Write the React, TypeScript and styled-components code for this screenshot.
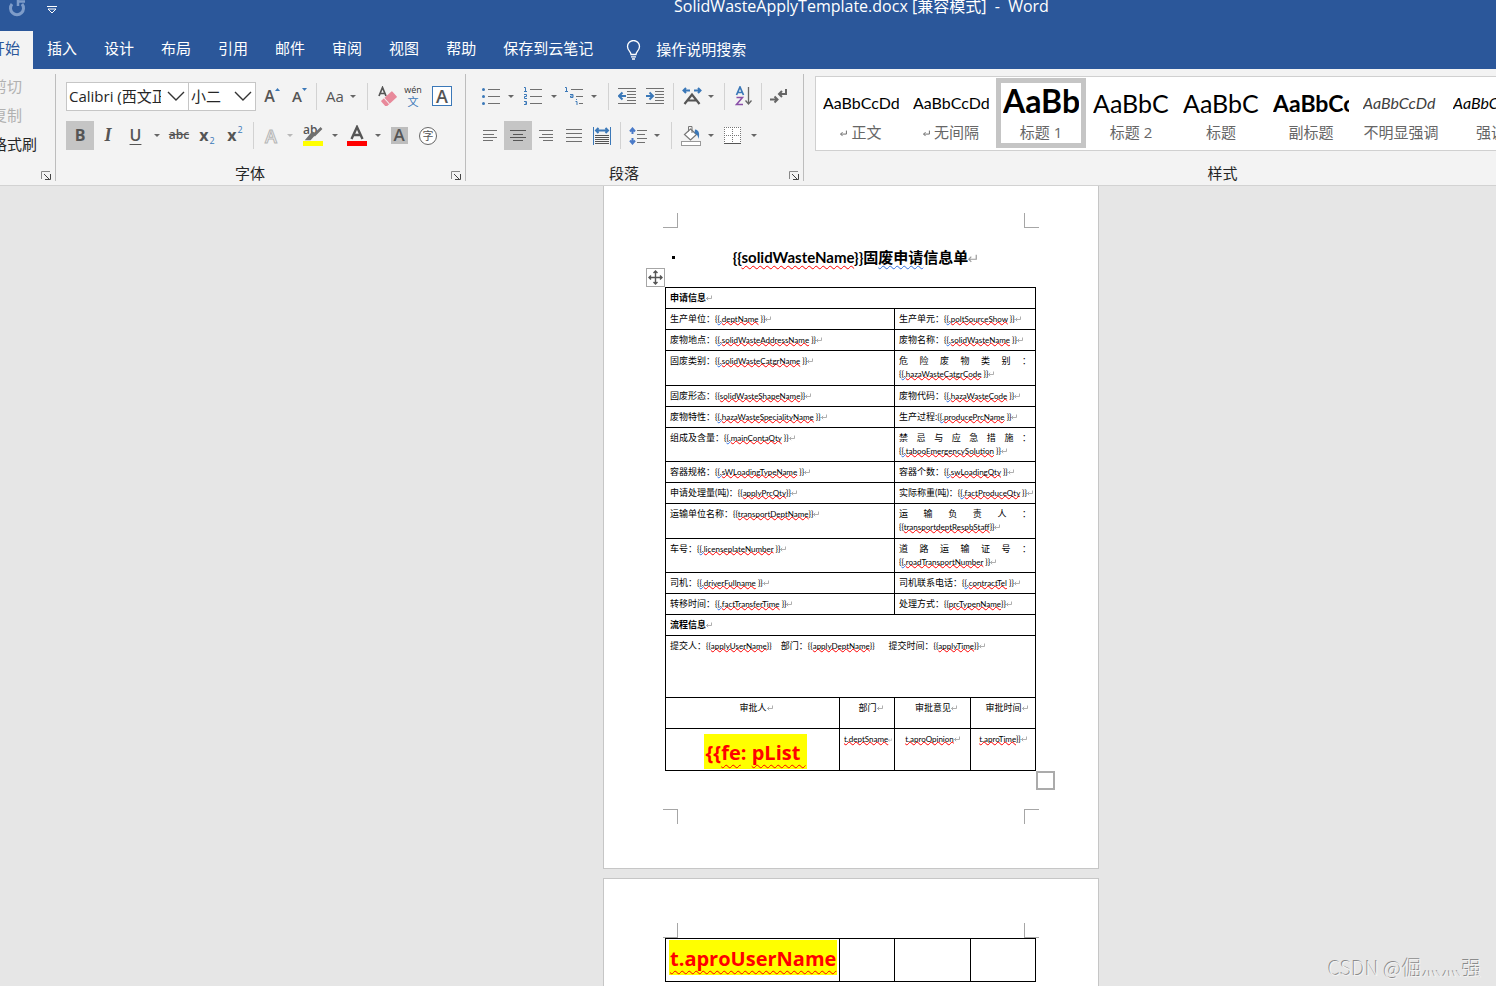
import React from "react";
import styled, { createGlobalStyle, css } from "styled-components";

const UI = `"Open Sans", "Noto Sans CJK SC", sans-serif`;
const DOC = `Lato, "Noto Sans CJK SC", sans-serif`;
const BLUE = "#3b78b8";
const GRAY = "#666666";

const Global = createGlobalStyle`
  *, *::before, *::after { box-sizing: border-box; }
  html, body { margin: 0; padding: 0; }
  body { font-family: ${UI}; font-size: 15px; color: #262626; background: #e6e6e6; }
  button, select { font: inherit; color: inherit; margin: 0; border: 0; padding: 0; background: none; }
  svg { display: block; flex: none; }
`;

/* ---------- window frame ---------- */
const Shell = styled.div`
  display: flex;
  flex-direction: column;
  height: 100vh;
  overflow: hidden;
`;
const TitleBar = styled.header`
  position: relative;
  flex: none;
  display: flex;
  align-items: flex-start;
  gap: 21px;
  height: 31px;
  padding: 0 8px;
  background: #2b579a;
  color: #fff;
`;
const QuickButton = styled.button`
  display: flex;
  height: 18px;
  align-items: center;
`;
const DocName = styled.h1`
  margin: 0;
  position: absolute;
  left: 0;
  right: 0;
  top: -4px;
  padding-left: 227px;
  text-align: center;
  font-size: 16px;
  line-height: 20px;
  font-weight: 400;
  white-space: pre;
  pointer-events: none;
`;
const TabBar = styled.nav`
  flex: none;
  display: flex;
  gap: 1px;
  height: 38px;
  background: #2b579a;
  overflow: hidden;
`;
const Tab = styled.button<{ $active?: boolean }>`
  flex: none;
  padding: 0 13px;
  line-height: 34px;
  padding-bottom: 4px;
  color: ${(p) => (p.$active ? "#2b579a" : "#fff")};
  background: ${(p) => (p.$active ? "#f3f3f3" : "transparent")};
  &:first-child { margin-left: -23px; }
`;
const TellMe = styled.button`
  display: flex;
  align-items: center;
  gap: 15px;
  padding: 0 19px 4px;
  color: #fff;
  svg { margin-top: 4px; }
`;

/* ---------- ribbon ---------- */
const Ribbon = styled.section`
  flex: none;
  display: flex;
  height: 117px;
  padding: 5px 0 4px;
  background: #f3f3f3;
  border-bottom: 1px solid #d2d2d2;
  overflow: hidden;
`;
const Group = styled.div<{ $w?: number }>`
  position: relative;
  flex: ${(p) => (p.$w ? "none" : "1")};
  min-width: 0;
  width: ${(p) => (p.$w ? p.$w + "px" : "auto")};
  display: flex;
  flex-direction: column;
  padding: 8px 0 0 10px;
  border-right: ${(p) => (p.$w ? "1px solid #bdbdbd" : "0")};
`;
const StylesGroup = styled(Group)`
  padding: 2px 0 0 11px;
`;
const GroupLabel = styled.div<{ $before?: number; $after?: number }>`
  margin: auto 0 -2px -10px;
  padding: 0 ${(p) => p.$after || 0}px 0 ${(p) => p.$before || 0}px;
  text-align: center;
  line-height: 20px;
`;
const Launcher = styled.button`
  position: absolute;
  right: 4px;
  bottom: 1px;
`;
const ClipList = styled.div`
  display: flex;
  flex-direction: column;
  align-items: flex-start;
  margin-left: -18px;
  margin-top: -6px;
  line-height: 20px;
  gap: 9px;
`;
const ClipButton = styled.button<{ $off?: boolean }>`
  line-height: 20px;
  white-space: nowrap;
  color: ${(p) => (p.$off ? "#b1b1b1" : "#262626")};
`;
const Row = styled.div`
  display: flex;
  align-items: center;
  height: 28px;
  & + & { margin-top: 11px; height: 29px; }
`;
const Tool = styled.button<{ $w: number; $on?: boolean }>`
  flex: none;
  display: flex;
  align-items: center;
  justify-content: center;
  width: ${(p) => p.$w}px;
  height: 29px;
  background: ${(p) => (p.$on ? "#c5c5c5" : "transparent")};
`;
const Sep = styled.span<{ $lead?: number; $tail?: number }>`
  flex: none;
  width: 1px;
  height: 27px;
  margin: 0 ${(p) => p.$tail ?? 4}px 0 ${(p) => p.$lead ?? 4}px;
  background: #d2d2d2;
`;
const Combo = styled.label<{ $w: number }>`
  flex: none;
  display: flex;
  align-items: center;
  gap: 6px;
  width: ${(p) => p.$w}px;
  height: 29px;
  padding: 0 3px 0 2px;
  background: #fff;
  border: 1px solid #c6c6c6;
  & + & { gap: 0; margin-left: -1px; margin-right: 2px; }
`;
const ComboSelect = styled.select`
  appearance: none;
  flex: 1;
  min-width: 0;
  height: 24px;
  outline: 0;
`;

const Arrow = ({ w = 12, off, label }: { w?: number; off?: boolean; label: string }) => (
  <Tool $w={w} aria-label={label}>
    <svg width="6" height="3" viewBox="0 0 6 3"><path d="M0 0h6L3 3z" fill={off ? "#b8b8b8" : GRAY} /></svg>
  </Tool>
);
const Chevron = () => (
  <svg width="18" height="10" viewBox="0 0 18 10"><path d="M1 1l8 8 8-8" fill="none" stroke="#333" strokeWidth="1.4" /></svg>
);
const Launch = ({ label }: { label: string }) => (
  <Launcher aria-label={label}>
    <svg width="10" height="9" viewBox="0 0 10 9" fill="none" stroke="#444">
      <path d="M.5 8V.5H9" stroke="#888" /><path d="M3 3l5 5M4 8.500h5.500V3" />
    </svg>
  </Launcher>
);

/* text-like icons drawn with type */
const Glyph = styled.span<{ $size?: number; $weight?: number; $italic?: boolean; $serif?: boolean; $line?: string }>`
  font-family: ${(p) => (p.$serif ? `"Liberation Serif", serif` : UI)};
  font-size: ${(p) => p.$size || 16}px;
  font-weight: ${(p) => p.$weight || 600};
  font-style: ${(p) => (p.$italic ? "italic" : "normal")};
  line-height: 20px;
  padding-bottom: 1px;
  color: #555;
  text-decoration: ${(p) => p.$line || "none"};
  text-decoration-thickness: 1px;
  text-underline-offset: 3px;
`;
const Script = styled.span<{ $up?: boolean }>`
  align-self: ${(p) => (p.$up ? "flex-start" : "flex-end")};
  margin: ${(p) => (p.$up ? "4px 0 0 1px" : "0 0 4px 1px")};
  font-size: 9px;
  line-height: 10px;
  color: ${BLUE};
`;
const Stack = styled.span`
  display: flex;
  flex-direction: column;
  align-items: center;
`;
const Pinyin = styled.span`
  font-size: 9px;
  line-height: 11px;
  color: #333;
`;
const Han = styled.span`
  font-size: 11px;
  line-height: 14px;
  color: ${BLUE};
`;
const BoxedA = styled.span`
  display: flex;
  align-items: center;
  justify-content: center;
  width: 20px;
  height: 20px;
  border: 1px solid ${BLUE};
  background: #fff;
`;
const ShadedA = styled(BoxedA)`
  width: 17px;
  height: 17px;
  border: 0;
  background: #bdbdbd;
`;
const Circled = styled(BoxedA)`
  width: 18px;
  height: 18px;
  border: 1px solid #666;
  border-radius: 50%;
  font-size: 11px;
  line-height: 16px;
  color: #555;
`;
const OutlineA = styled.span`
  font-size: 18px;
  font-weight: 600;
  line-height: 20px;
  color: #f6f6f6;
  -webkit-text-stroke: 1px #b5b5b5;
`;

const Lines = ({ rows, w = 18, h = 18, color = "#707070", children }: { rows: [number, number, number][]; w?: number; h?: number; color?: string; children?: React.ReactNode }) => (
  <svg width={w} height={h} viewBox={`0 0 ${w} ${h}`}>
    <g fill={color}>{rows.map(([x, y, l]) => <rect key={`${x}-${y}`} x={x} y={y} width={l} height="1" />)}</g>
    {children}
  </svg>
);

/* ---------- style gallery ---------- */
const Gallery = styled.div`
  display: flex;
  height: 75px;
  padding: 1px 0;
  background: #fff;
  border: 1px solid #d0d0d0;
  border-right: 0;
  overflow: hidden;
`;
const StyleCell = styled.button<{ $on?: boolean }>`
  flex: none;
  display: flex;
  flex-direction: column;
  width: 90px;
  height: 70px;
  padding: ${(p) => (p.$on ? "0 2px" : "5px 7px")};
  border: ${(p) => (p.$on ? "5px solid #c5c5c5" : "0")};
`;
const Preview = styled.span<{ $size: number; $weight?: number; $italic?: boolean; $color?: string }>`
  width: 76px;
  height: 37px;
  line-height: ${(p) => (p.$size > 30 ? 36 : 40)}px;
  overflow: hidden;
  white-space: nowrap;
  text-align: left;
  font-family: ${DOC};
  font-size: ${(p) => p.$size}px;
  font-weight: ${(p) => p.$weight || 400};
  font-style: ${(p) => (p.$italic ? "italic" : "normal")};
  color: ${(p) => p.$color || "#000"};
`;
const StyleName = styled.span`
  display: flex;
  align-self: stretch;
  align-items: center;
  justify-content: center;
  gap: 4px;
  height: 23px;
  line-height: 26px;
  white-space: nowrap;
  color: #666;
  svg { margin-top: 4px; }
`;

const styleList = [
  { text: "AaBbCcDd", name: "正文", size: 16, mark: true },
  { text: "AaBbCcDd", name: "无间隔", size: 16, mark: true },
  { text: "AaBb", name: "标题 1", size: 32, weight: 700, on: true },
  { text: "AaBbC", name: "标题 2", size: 25 },
  { text: "AaBbC", name: "标题", size: 25 },
  { text: "AaBbCc", name: "副标题", size: 23, weight: 700 },
  { text: "AaBbCcDd", name: "不明显强调", size: 16, italic: true, color: "#404040" },
  { text: "AaBbCcDd", name: "强调", size: 16, italic: true },
];

/* ---------- document ---------- */
const Canvas = styled.main`
  position: relative;
  flex: 1;
  min-height: 0;
  display: flex;
  flex-direction: column;
  align-items: center;
  gap: 9px;
  padding-left: 206px;
  background: #e6e6e6;
  overflow: hidden;
`;
const Page = styled.article<{ $first?: boolean }>`
  flex: none;
  width: 496px;
  padding: ${(p) => (p.$first ? "27px 59px 44px" : "44px 59px 60px")};
  background: #fff;
  border: 1px solid #c6c6c6;
  ${(p) => p.$first && css`border-top: 0;`}
`;
const MarkRow = styled.div`
  display: flex;
  justify-content: space-between;
`;
const Mark = styled.span<{ $v: "left" | "right"; $h: "top" | "bottom" }>`
  width: 15px;
  height: 15px;
  border: 0 solid #a6a6a6;
  border-${(p) => p.$v}-width: 1px;
  border-${(p) => p.$h}-width: 1px;
`;
const Heading = styled.h2`
  position: relative;
  margin: 19px 0 20px;
  padding-left: 8px;
  text-align: center;
  font-family: ${DOC};
  font-size: 15px;
  line-height: 20px;
  font-weight: 700;
  color: #000;
  white-space: nowrap;
  &::before {
    content: "";
    position: absolute;
    left: 9px;
    top: 9px;
    width: 3px;
    height: 3px;
    background: #000;
  }
`;
const TableWrap = styled.div<{ $below?: number }>`
  position: relative;
  margin: 0 2px ${(p) => p.$below || 0}px;
`;
const MoveHandle = styled.button`
  position: absolute;
  left: -19px;
  top: -19px;
  width: 19px;
  height: 19px;
  display: flex;
  align-items: center;
  justify-content: center;
  background: #fff;
  border: 1px solid #a6a6a6;
`;
const SizeHandle = styled.span`
  position: absolute;
  left: 371px;
  bottom: -19px;
  width: 19px;
  height: 19px;
  background: #fff;
  border: 2px solid #ababab;
`;
const Table = styled.table`
  width: 371px;
  table-layout: fixed;
  border-collapse: collapse;
  font-family: ${DOC};
  font-size: 9px;
  line-height: 13px;
  color: #000;
`;
const Cell = styled.td<{ $h?: number; $bold?: boolean; $center?: boolean; $head?: boolean }>`
  height: ${(p) => p.$h || 21}px;
  padding: 3px 4px 3px ${(p) => (p.$head ? 11 : 4)}px;
  border: 1px solid #000;
  vertical-align: top;
  text-align: ${(p) => (p.$center ? "center" : "left")};
  font-weight: ${(p) => (p.$bold ? 700 : 400)};
  white-space: pre;
`;
const BigCell = styled(Cell)<{ $top: number }>`
  padding: ${(p) => p.$top}px 0 0 ${(p) => (p.$center ? 6 : 3)}px;
  line-height: 0;
`;
const Spread = styled.div`
  text-align: justify;
  text-align-last: justify;
  white-space: normal;
`;
const Latin = styled.span`
  font-size: 8px;
`;
const Wavy = styled.span<{ $c?: string; $off?: number }>`
  text-decoration: underline wavy ${(p) => p.$c || "#ff0000"} 1px;
  text-decoration-skip-ink: none;
  text-underline-offset: ${(p) => p.$off ?? -1}px;
`;
const Highlight = styled.span`
  display: inline-block;
  height: 35px;
  padding: 0 1px;
  font-family: ${UI};
  font-size: 20px;
  font-weight: 700;
  line-height: 37px;
  color: #ff0000;
  background: #ffff00;
`;
const ReturnSvg = styled.svg`
  display: inline-block;
  vertical-align: baseline;
`;
const Ret = ({ w = 6, color = "#9a9a9a" }: { w?: number; color?: string }) => (
  <ReturnSvg width={w} height={w} viewBox="0 0 6 6" fill="none" stroke={color} strokeWidth=".8">
    <path d="M5.500 .5v3h-5M2.200 1.800L.5 3.500l1.700 1.700" />
  </ReturnSvg>
);
const Watermark = styled.div`
  position: absolute;
  right: 14px;
  bottom: 4px;
  font-family: "Noto Sans CJK SC", sans-serif;
  font-size: 20px;
  line-height: 28px;
  font-weight: 300;
  color: #f2f2f2;
  text-shadow: -1px -1px 0 #8c8c8c;
`;

type F = { label: string; name: string; dot?: boolean; spread?: boolean };
const Field = ({ f, ret = true }: { f: F; ret?: boolean }) => (
  <>
    {f.spread ? <Spread>{f.label}</Spread> : f.label}
    <Latin>
      {f.dot ? <>{"{"}<Wavy $c="#2f6fe0">{"{."}</Wavy></> : "{{"}
      <Wavy>{f.name}</Wavy>
      {(f.dot ? " " : "") + "}}"}
    </Latin>
    {ret && <Ret />}
  </>
);

const rows: [F, F, number][] = [
  [{ label: "生产单位：", name: "deptName", dot: true }, { label: "生产单元：", name: "poltSourceShow", dot: true }, 21],
  [{ label: "废物地点：", name: "solidWasteAddressName", dot: true }, { label: "废物名称：", name: "solidWasteName", dot: true }, 21],
  [{ label: "固废类别：", name: "solidWasteCatgrName", dot: true }, { label: "危险废物类别：", name: "hazaWasteCatgrCode", dot: true, spread: true }, 35],
  [{ label: "固废形态：", name: "solidWasteShapeName" }, { label: "废物代码：", name: "hazaWasteCode", dot: true }, 21],
  [{ label: "废物特性：", name: "hazaWasteSpecialityName", dot: true }, { label: "生产过程:", name: "producePrcName", dot: true }, 21],
  [{ label: "组成及含量：", name: "mainContaQty", dot: true }, { label: "禁忌与应急措施：", name: "tabooEmergencySolution", dot: true, spread: true }, 34],
  [{ label: "容器规格：", name: "sWLoadingTypeName", dot: true }, { label: "容器个数：", name: "swLoadingQty", dot: true }, 21],
  [{ label: "申请处理量(吨)：", name: "applyPrcQty" }, { label: "实际称重(吨)：", name: "factProduceQty", dot: true }, 21],
  [{ label: "运输单位名称：", name: "transportDeptName" }, { label: "运输负责人：", name: "transportdeptRespbStaff", spread: true }, 35],
  [{ label: "车号：", name: "licenseplateNumber", dot: true }, { label: "道路运输证号：", name: "roadTransportNumber", dot: true, spread: true }, 34],
  [{ label: "司机：", name: "driverFullname", dot: true }, { label: "司机联系电话：", name: "contractTel", dot: true }, 21],
  [{ label: "转移时间：", name: "factTransferTime", dot: true }, { label: "处理方式：", name: "prcTypenName" }, 21],
];

const Col = styled.col<{ $w: number }>`
  width: ${(p) => p.$w}px;
`;
const Cols = () => (
  <colgroup><Col $w={174} /><Col $w={55} /><Col $w={76} /><Col $w={65} /></colgroup>
);

const FontGroup = () => (
  <Group $w={410}>
    <Row>
      <Combo $w={123}>
        <ComboSelect aria-label="字体"><option>Calibri (西文正文)</option></ComboSelect>
        <Chevron />
      </Combo>
      <Combo $w={68}>
        <ComboSelect aria-label="字号"><option>小二</option></ComboSelect>
        <Chevron />
      </Combo>
      <Tool $w={28} aria-label="增大字号">
        <Glyph $size={16}>A</Glyph>
        <svg width="5" height="17" viewBox="0 0 5 17"><path d="M0 3L2.500 0 5 3z" fill={BLUE} /></svg>
      </Tool>
      <Tool $w={27} aria-label="减小字号">
        <Glyph $size={15}>A</Glyph>
        <svg width="5" height="17" viewBox="0 0 5 17"><path d="M0 0h5L2.500 3z" fill={BLUE} /></svg>
      </Tool>
      <Sep $lead={3} $tail={3} />
      <Tool $w={30} aria-label="更改大小写"><Glyph $size={15} $weight={400}>Aa</Glyph></Tool>
      <Arrow w={6} label="大小写选项" />
      <Sep $lead={11} $tail={3} />
      <Tool $w={32} aria-label="清除格式">
        <svg width="20" height="20" viewBox="0 0 20 20">
          <path d="M2 10L5.500 1.500 9 10M3 7.500h5" fill="none" stroke="#555" strokeWidth="1.700" />
          <g transform="rotate(-42 12 13)"><rect x="4.500" y="9" width="15" height="8" rx="1" fill="#e8899a" /><path d="M9 9v8" stroke="#f3f3f3" /></g>
        </svg>
      </Tool>
      <Tool $w={20} aria-label="拼音指南"><Stack><Pinyin>wén</Pinyin><Han>文</Han></Stack></Tool>
      <Tool $w={38} aria-label="字符边框"><BoxedA><Glyph $size={18}>A</Glyph></BoxedA></Tool>
    </Row>
    <Row>
      <Tool $w={28} $on aria-label="加粗"><Glyph $weight={700}>B</Glyph></Tool>
      <Tool $w={28} aria-label="倾斜"><Glyph $serif $italic $weight={700} $size={18}>I</Glyph></Tool>
      <Tool $w={27} aria-label="下划线"><Glyph $line="underline">U</Glyph></Tool>
      <Arrow w={16} label="下划线选项" />
      <Tool $w={28} aria-label="删除线"><Glyph $size={12} $line="line-through">abc</Glyph></Tool>
      <Tool $w={28} aria-label="下标"><Glyph $weight={700}>x</Glyph><Script>2</Script></Tool>
      <Tool $w={28} aria-label="上标"><Glyph $weight={700}>x</Glyph><Script $up>2</Script></Tool>
      <Sep />
      <Tool $w={26} aria-label="文本效果"><OutlineA>A</OutlineA></Tool>
      <Arrow off label="文本效果选项" />
      <Tool $w={33} aria-label="突出显示">
        <svg width="20" height="22" viewBox="0 0 20 22">
          <text x="0" y="9" fontFamily="Open Sans" fontSize="12" fontWeight="600" fill="#555">ab</text>
          <path d="M18.500 3L11 10.500M11.500 9L7 14H4.500l5-6z" stroke="#707070" strokeWidth="2.600" fill="#707070" />
          <rect y="16" width="20" height="5" fill="#ff0" />
        </svg>
      </Tool>
      <Arrow label="突出显示颜色" />
      <Tool $w={31} aria-label="字体颜色">
        <svg width="20" height="22" viewBox="0 0 20 22">
          <path d="M4.500 14L10 2l5.500 12M6.500 10h7" fill="none" stroke="#555" strokeWidth="2.400" />
          <rect y="16" width="20" height="5" fill="#f00" />
        </svg>
      </Tool>
      <Arrow label="字体颜色选项" />
      <Tool $w={30} aria-label="字符底纹"><ShadedA><Glyph $size={17}>A</Glyph></ShadedA></Tool>
      <Tool $w={28} aria-label="带圈字符"><Circled>字</Circled></Tool>
    </Row>
    <GroupLabel $after={21}>字体</GroupLabel>
    <Launch label="字体设置" />
  </Group>
);

const ParagraphGroup = () => (
  <Group $w={338}>
    <Row>
      <Tool $w={29} aria-label="项目符号">
        <Lines rows={[[6, 2, 12], [6, 9, 12], [6, 16, 12]]}>
          <g fill={BLUE}><circle cx="1.500" cy="2.500" r="1.500" /><circle cx="1.500" cy="9.500" r="1.500" /><circle cx="1.500" cy="16.500" r="1.500" /></g>
        </Lines>
      </Tool>
      <Arrow label="项目符号选项" />
      <Tool $w={31} aria-label="编号">
        <Lines rows={[[6, 2, 12], [6, 9, 12], [6, 16, 12]]}>
          <path d="M0 .5h1.500V4M0 4.500h3M0 7.500h2.500v2H.5v2H3M0 14.500h2.500v3H0M1 16h1.500" fill="none" stroke={BLUE} />
        </Lines>
      </Tool>
      <Arrow label="编号选项" />
      <Tool $w={28} aria-label="多级列表">
        <Lines rows={[[6, 2, 12], [11, 9, 7], [14, 16, 4]]}>
          <path d="M0 .5h1.500V4M0 4.500h3M5 7.500h3v3H5.500v-1.500H8M10.500 14.500h1.500V18M11.500 12v1" fill="none" stroke={BLUE} />
        </Lines>
      </Tool>
      <Arrow label="多级列表选项" />
      <Sep $lead={8} />
      <Tool $w={28} aria-label="减少缩进">
        <Lines rows={[[0, 1, 18], [9, 4, 9], [9, 7, 9], [9, 10, 9], [9, 13, 9], [0, 16, 18]]}>
          <path d="M8 9H1.500M4.500 5.500L1 9l3.500 3.500" fill="none" stroke={BLUE} strokeWidth="2" />
        </Lines>
      </Tool>
      <Tool $w={28} aria-label="增加缩进">
        <Lines rows={[[0, 1, 18], [9, 4, 9], [9, 7, 9], [9, 10, 9], [9, 13, 9], [0, 16, 18]]}>
          <path d="M0 9h6.500M3.500 5.500L7 9l-3.500 3.500" fill="none" stroke={BLUE} strokeWidth="2" />
        </Lines>
      </Tool>
      <Sep />
      <Tool $w={28} aria-label="中文版式">
        <svg width="20" height="18" viewBox="0 0 20 18" fill="none">
          <path d="M8 3.500H1.500M4 1L1.500 3.500 4 6M12 3.500h6.500M16 1l2.500 2.500L16 6" stroke={BLUE} strokeWidth="2" />
          <path d="M2.500 17L10 7.500l7.500 9.500M6 13.500h8" stroke="#555" strokeWidth="2.200" />
        </svg>
      </Tool>
      <Arrow w={10} label="中文版式选项" />
      <Sep $lead={8} />
      <Tool $w={30} aria-label="排序">
        <svg width="18" height="20" viewBox="0 0 18 20" fill="none">
          <path d="M1.500 9L5 1l3.500 8M2.500 6.500h5" stroke={BLUE} strokeWidth="1.700" />
          <path d="M1.500 11.500h6L1.500 18.500H8" stroke="#8a50a8" strokeWidth="1.500" />
          <path d="M13.500 1v17M10.500 14.500l3 3.500 3-3.500" stroke="#666" strokeWidth="1.300" />
        </svg>
      </Tool>
      <Sep $lead={2} />
      <Tool $w={26} aria-label="显示编辑标记">
        <svg width="18" height="16" viewBox="0 0 18 16" fill="none" stroke="#666" strokeWidth="2">
          <path d="M16 1v5H9M12 3L9 6l3 3" /><path d="M0 11.500h7M4.500 8.500l3 3-3 3" />
        </svg>
      </Tool>
    </Row>
    <Row>
      <Tool $w={28} aria-label="左对齐"><Lines w={14} rows={[[0, 3, 14], [0, 7, 11], [0, 10, 14], [0, 13, 10]]} /></Tool>
      <Tool $w={28} $on aria-label="居中"><Lines w={16} color="#555" rows={[[0, 3, 16], [3, 7, 10], [0, 10, 16], [3, 13, 10]]} /></Tool>
      <Tool $w={28} aria-label="右对齐"><Lines w={14} rows={[[0, 3, 14], [3, 7, 11], [0, 10, 14], [4, 13, 10]]} /></Tool>
      <Tool $w={28} aria-label="两端对齐"><Lines w={16} rows={[[0, 2, 16], [0, 6, 16], [0, 10, 16], [0, 14, 16]]} /></Tool>
      <Tool $w={28} aria-label="分散对齐">
        <Lines rows={[[2, 8, 14], [2, 10, 14], [2, 12, 14], [2, 14, 14], [2, 16, 14]]} color="#555">
          <path d="M.5 0v18M17.500 0v18" stroke={BLUE} />
          <path d="M3 3.500h12M5.500 1L3 3.500 5.500 6M12.500 1L15 3.500 12.500 6" fill="none" stroke={BLUE} strokeWidth="2" />
        </Lines>
      </Tool>
      <Sep />
      <Tool $w={26} aria-label="行距">
        <Lines rows={[[8, 3, 10], [8, 7, 8], [8, 11, 10], [8, 15, 8]]}>
          <path d="M3.500 1.500v5.500M1 4.500l2.500-3L6 4.500M3.500 11v5.500M1 13.500l2.500 3 2.500-3" fill="none" stroke="#4a7ac8" strokeWidth="2" />
        </Lines>
      </Tool>
      <Arrow label="行距选项" />
      <Sep $lead={8} />
      <Tool $w={29} aria-label="底纹">
        <svg width="20" height="21" viewBox="0 0 20 21" fill="none" stroke="#777">
          <path d="M9.500 4L15.500 9.500l-6 5.500-6-5.500z" fill="#fff" strokeWidth="1.200" /><path d="M7.500 6.500V1.500h3.500V8" />
          <path d="M14 4.500c4 .5 5 4 3.500 9.500-.5-3-1.500-5-4-6z" fill={BLUE} stroke="none" />
          <rect x=".5" y="16.500" width="19" height="4" fill="#fff" stroke="#999" />
        </svg>
      </Tool>
      <Arrow label="底纹选项" />
      <Tool $w={31} aria-label="边框">
        <svg width="17" height="18" viewBox="0 0 17 18" fill="none" stroke="#777">
          <rect width="17" height="17" fill="#fff" stroke="none" />
          <path d="M0 .5h17M.5 0v16M16.500 0v16M8.500 0v16M0 8.500h17" strokeDasharray="1 1" />
          <path d="M0 16.500h17" stroke="#555" />
        </svg>
      </Tool>
      <Arrow label="边框选项" />
    </Row>
    <GroupLabel $after={21}>段落</GroupLabel>
    <Launch label="段落设置" />
  </Group>
);

export default function App() {
  return (
    <Shell>
      <Global />
      <TitleBar>
        <QuickButton aria-label="重复">
          <svg width="18" height="18" viewBox="0 0 18 18" fill="none" stroke="#7e9cc9" strokeWidth="3">
            <path d="M4 4A6.500 6.500 0 1 0 14 4" /><path d="M10 0v6M10 1.500h7" strokeWidth="2.500" />
          </svg>
        </QuickButton>
        <QuickButton aria-label="自定义快速访问工具栏">
          <svg width="10" height="18" viewBox="0 0 10 18" fill="none" stroke="#fff"><path d="M0 6.500h10M1 9l4 4 4-4z" /></svg>
        </QuickButton>
        <DocName>{"SolidWasteApplyTemplate.docx [兼容模式]  -  Word"}</DocName>
      </TitleBar>
      <TabBar>
        <Tab $active>开始</Tab>
        {["插入", "设计", "布局", "引用", "邮件", "审阅", "视图", "帮助", "保存到云笔记"].map((t) => <Tab key={t}>{t}</Tab>)}
        <TellMe>
          <svg width="15" height="20" viewBox="0 0 15 20" fill="none" stroke="#fff" strokeWidth="1.300">
            <path d="M5 14.500c0-3-3.500-4-3.500-8a6 6 0 0 1 12 0c0 4-3.500 5-3.500 8zM5 16.800h5M6 19h3" />
          </svg>
          操作说明搜索
        </TellMe>
      </TabBar>

      <Ribbon>
        <Group $w={56}>
          <ClipList>
            <ClipButton $off>剪切</ClipButton>
            <ClipButton $off>复制</ClipButton>
            <ClipButton>格式刷</ClipButton>
          </ClipList>
          <Launch label="剪贴板设置" />
        </Group>
        <FontGroup />
        <ParagraphGroup />
        <StylesGroup>
          <Gallery>
            {styleList.map((s, i) => (
              <StyleCell key={i} $on={s.on}>
                <Preview $size={s.size} $weight={s.weight} $italic={s.italic} $color={s.color}>{s.text}</Preview>
                <StyleName>{s.mark && <Ret w={7} color="#666" />}{s.name}</StyleName>
              </StyleCell>
            ))}
          </Gallery>
          <GroupLabel $before={144}>样式</GroupLabel>
        </StylesGroup>
      </Ribbon>

      <Canvas>
        <Page $first>
          <MarkRow><Mark $v="right" $h="bottom" /><Mark $v="left" $h="bottom" /></MarkRow>
          <Heading>
            {"{{"}<Wavy $off={2}>solidWasteName</Wavy>{"}}"}
            固<Wavy $c="#2f6fe0" $off={2}>废申请</Wavy>信息单<Ret w={9} />
          </Heading>
          <TableWrap $below={38}>
            <MoveHandle aria-label="移动表格">
              <svg width="15" height="15" viewBox="0 0 15 15" fill="none" stroke="#555" strokeWidth="1.400">
                <path d="M7.500 1v13M1 7.500h13M5.500 3l2-2 2 2M5.500 12l2 2 2-2M3 5.500l-2 2 2 2M12 5.500l2 2-2 2" />
              </svg>
            </MoveHandle>
            <Table>
              <Cols />
              <tbody>
                <tr><Cell colSpan={4} $bold>申请信息<Ret /></Cell></tr>
                {rows.map(([a, b, h], i) => (
                  <tr key={i}>
                    <Cell colSpan={2} $h={h}><Field f={a} /></Cell>
                    <Cell colSpan={2} $h={h}><Field f={b} /></Cell>
                  </tr>
                ))}
                <tr><Cell colSpan={4} $bold>流程信息<Ret /></Cell></tr>
                <tr>
                  <Cell colSpan={4} $h={62}>
                    <Field ret={false} f={{ label: "提交人：", name: "applyUserName" }} />
                    {"    "}
                    <Field ret={false} f={{ label: "部门：", name: "applyDeptName" }} />
                    {"      "}
                    <Field f={{ label: "提交时间：", name: "applyTime" }} />
                  </Cell>
                </tr>
                <tr>
                  {["审批人", "部门", "审批意见", "审批时间"].map((t) => <Cell key={t} $h={31} $center $head>{t}<Ret /></Cell>)}
                </tr>
                <tr>
                  <BigCell $h={42} $top={5} $center><Highlight>{"{{"}<Wavy $off={4}>fe</Wavy>{": "}<Wavy $off={4}>{"pList "}</Wavy></Highlight></BigCell>
                  <Cell $center><Latin><Wavy>t.deptSname</Wavy></Latin><Ret w={4} /></Cell>
                  <Cell $center><Latin><Wavy>t.aproOpinion</Wavy></Latin><Ret /></Cell>
                  <Cell $center><Latin><Wavy>t.aproTime</Wavy>{"}}"}</Latin><Ret /></Cell>
                </tr>
              </tbody>
            </Table>
            <SizeHandle />
          </TableWrap>
          <MarkRow><Mark $v="right" $h="top" /><Mark $v="left" $h="top" /></MarkRow>
        </Page>
        <Page>
          <MarkRow><Mark $v="right" $h="bottom" /><Mark $v="left" $h="bottom" /></MarkRow>
          <TableWrap>
            <Table>
              <Cols />
              <tbody>
                <tr><BigCell $h={43} $top={1}><Highlight><Wavy $off={4}>t.aproUserName</Wavy></Highlight></BigCell><Cell /><Cell /><Cell /></tr>
              </tbody>
            </Table>
          </TableWrap>
        </Page>
        <Watermark>CSDN @倔灬灬强</Watermark>
      </Canvas>
    </Shell>
  );
}
